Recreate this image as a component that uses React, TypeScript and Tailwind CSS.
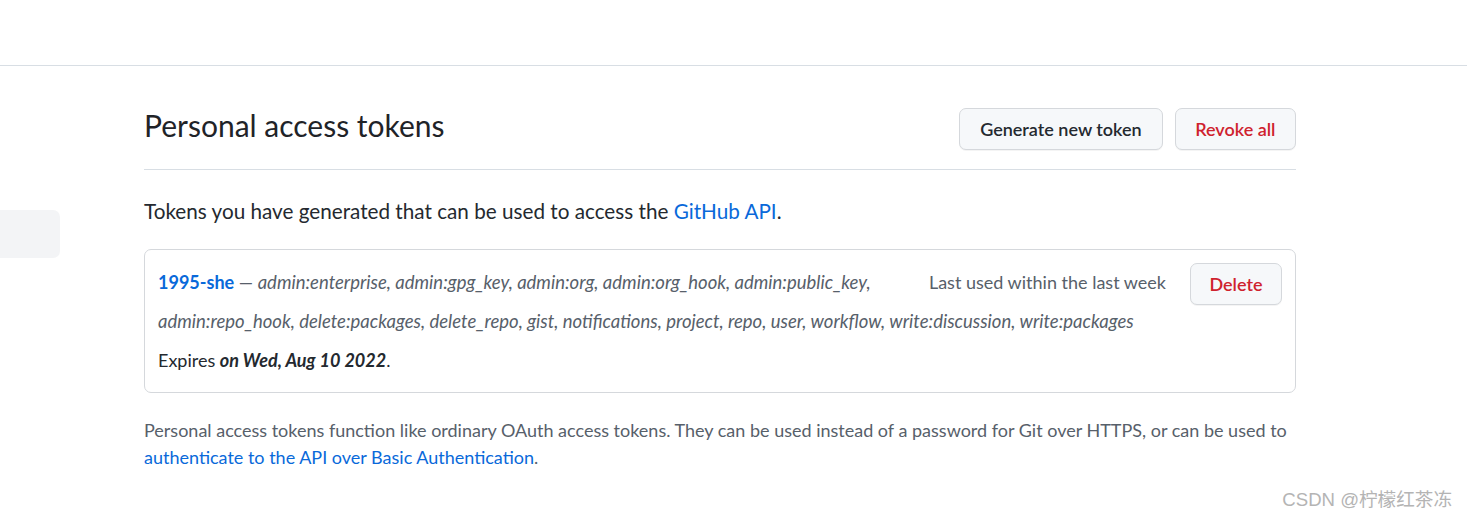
const scopes =
  'admin:enterprise, admin:gpg_key, admin:org, admin:org_hook, admin:public_key,';
const scopes2 =
  'admin:repo_hook, delete:packages, delete_repo, gist, notifications, project, repo, user, workflow, write:discussion, write:packages';

function Button({ children, danger, className = '' }: { children: React.ReactNode; danger?: boolean; className?: string }) {
  return (
    <button
      className={`h-[42px] rounded-[7px] border border-[#d5d8dc] bg-[#f6f8fa] text-[18px] font-semibold shadow-[0_1px_0_rgba(31,35,40,0.05)] ${
        danger ? 'text-[#cf222e]' : 'text-[#24292f]'
      } ${className}`}
    >
      {children}
    </button>
  );
}

export default function App() {
  return (
    <div
      className="relative min-h-[521px] bg-white text-[#24292f]"
      style={{ fontFamily: 'Lato, "Noto Sans", sans-serif' }}
    >
      <div className="h-[66px] border-b border-[#d8dee4]" />

      <div className="flex">
        <div className="w-[60px] shrink-0">
          <div className="mt-[144px] h-[48px] rounded-r-[7px] bg-[#f3f4f6]" />
        </div>

        <div className="ml-[84px] w-[1152px] pt-[42px]">
          <div className="flex items-start justify-between border-b border-[#d8dee4] pb-[19px]">
            <h2 className="text-[30px] leading-[35px] font-normal text-[#1f2328]">Personal access tokens</h2>
            <div className="flex gap-3">
              <Button className="px-[20px]">Generate new token</Button>
              <Button danger className="px-[19.5px]">Revoke all</Button>
            </div>
          </div>

          <p className="mt-[26px] text-[20.7px] leading-[30px]">
            Tokens you have generated that can be used to access the{' '}
            <span className="text-[#0969da]">GitHub API</span>.
          </p>

          <div className="mt-[23px] rounded-[7px] border border-[#d5d8dc] px-[13px] pt-[13px] pb-[12px] text-[18px] leading-[39px]">
            <Button danger className="float-right w-[92px]">Delete</Button>
            <span className="float-right mr-[24px] text-[#57606a]">Last used within the last week</span>
            <div>
              <span className="font-bold text-[#0969da]">1995-she</span>
              <span className="text-[#57606a]"> — </span>
              <em className="text-[18.5px] text-[#57606a]">
                {scopes}
                <br />
                {scopes2}
              </em>
            </div>
            <div>
              Expires <em className="font-bold">on Wed, Aug 10 2022</em>.
            </div>
          </div>

          <p className="mt-[24px] text-[18px] leading-[27px] text-[#57606a]">
            Personal access tokens function like ordinary OAuth access tokens. They can be used instead of a password for
            Git over HTTPS, or can be used to{' '}
            <span className="text-[#0969da]">authenticate to the API over Basic Authentication</span>.
          </p>
        </div>
      </div>

      <div
        className="absolute right-[15px] bottom-[7px] text-[18.6px] text-[#b4b4b4]"
        style={{ fontFamily: '"Liberation Sans", "Noto Sans CJK SC", sans-serif' }}
      >
        CSDN @柠檬红茶冻
      </div>
    </div>
  );
}
